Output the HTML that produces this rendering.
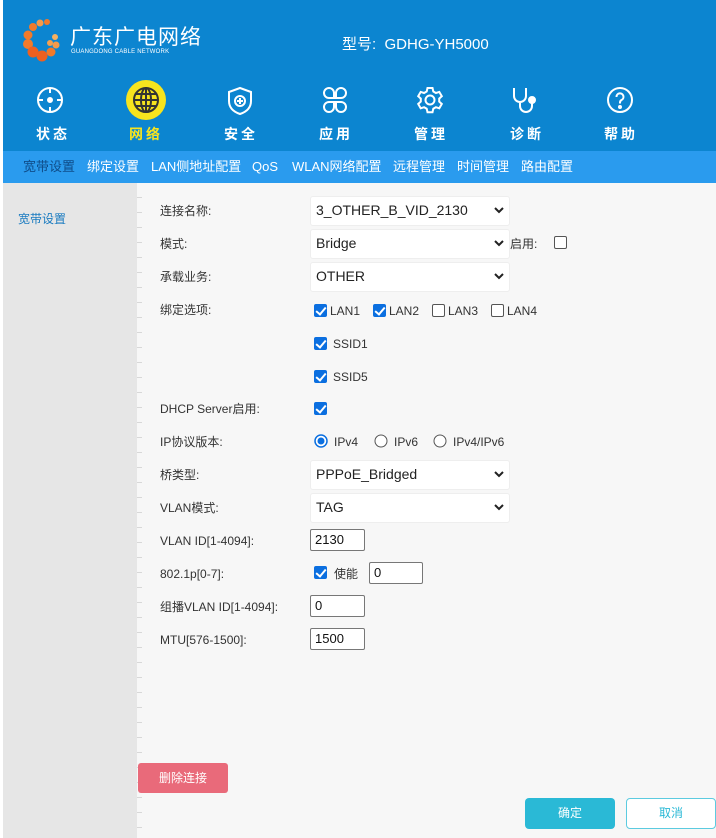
<!DOCTYPE html>
<html><head><meta charset="utf-8">
<style>
*{margin:0;padding:0;box-sizing:border-box}
body{width:716px;height:838px;background:#fff;font-family:"Liberation Sans","Noto Sans CJK SC",sans-serif;position:relative;overflow:hidden}
.hdr{position:absolute;left:3px;top:0;width:713px;height:151px;background:#0c85d0}
.sub{position:absolute;left:3px;top:151px;width:713px;height:32px;background:#2a9bee;font-size:13px;color:#fff}
.sub span{position:absolute;top:8px;white-space:nowrap;line-height:16px;height:16px}
.side{position:absolute;left:3px;top:183px;width:134px;height:655px;background:#e6e6e6}
.main{position:absolute;left:137px;top:183px;width:579px;height:655px;background:#f7f7f7;
 background-image:repeating-linear-gradient(to bottom,transparent 0,transparent 14px,#d8d8d8 14px,#d8d8d8 15px);background-size:5px 100%;background-repeat:no-repeat}
.abs{position:absolute;white-space:nowrap}
.lbl{position:absolute;left:160px;font-size:12px;color:#333;line-height:14px}
.sel{position:absolute;left:310px;width:200px;height:30px;background:#fff;border:1px solid #eee;border-radius:3px;font-size:14px;color:#222;padding:5px 0 0 5px}
.sel svg{position:absolute;right:5px;top:10px}
.inp{position:absolute;height:22px;background:#fff;border:1px solid #777;border-radius:2px;font-size:13px;color:#111;padding:2px 0 0 4px}
.cb{position:absolute;width:13px;height:13px;border-radius:2px}
.cb.on{background:#0b6fe0}
.cb.off{border:1px solid #555;background:#fff}
.cb.on::after{content:"";position:absolute;left:4px;top:1px;width:4px;height:8px;border:solid #fff;border-width:0 2px 2px 0;transform:rotate(40deg)}
.t{position:absolute;font-size:12px;color:#333;line-height:14px}
.nav{position:absolute;top:124px;font-size:14px;font-weight:bold;color:#fff;letter-spacing:3px}
</style></head><body>
<div class="hdr"></div>
<svg class="abs" style="left:20px;top:17px" width="50" height="46" viewBox="0 0 50 46">
<g fill="#f27a2a"><circle cx="20" cy="6" r="3.5" fill="#f59a4a"/><circle cx="27" cy="5" r="3"/><circle cx="13" cy="10" r="4"/><circle cx="8" cy="18" r="4.5"/><circle cx="8" cy="27" r="5"/><circle cx="13" cy="35" r="5.5" fill="#ee6020"/><circle cx="22" cy="39" r="5.5" fill="#ee6020"/><circle cx="31" cy="35" r="4.5"/><circle cx="36" cy="28" r="3.5" fill="#f59a4a"/><circle cx="30" cy="26" r="3" fill="#f5a050"/><circle cx="35" cy="20" r="3" fill="#f5b060"/></g></svg>
<div class="abs" style="left:70px;top:26px;font-size:21px;line-height:24px;color:#fff;letter-spacing:1px">广东广电网络</div>
<div class="abs" style="left:71px;top:49px;font-size:6px;line-height:7px;color:#fff;letter-spacing:.2px">GUANGDONG CABLE NETWORK</div>
<div class="abs" style="left:342px;top:33px;font-size:15px;color:#fff">型号:&nbsp; GDHG-YH5000</div>
<svg class="abs" style="left:36px;top:86px" width="28" height="28" viewBox="0 0 28 28" fill="none" stroke="#fff" stroke-width="2"><circle cx="14" cy="14" r="12"/><path d="M14 2v5M14 21v5M2 14h5M21 14h5"/><circle cx="14" cy="14" r="2" fill="#fff"/></svg>
<svg class="abs" style="left:125px;top:79px" width="42" height="42" viewBox="0 0 42 42"><circle cx="21" cy="21" r="20" fill="#f7e41e"/><g fill="none" stroke="#333" stroke-width="2"><circle cx="21" cy="21" r="12"/><ellipse cx="21" cy="21" rx="5" ry="12"/><path d="M9 21h24M11 15h20M11 27h20M21 9v24"/></g></svg>
<svg class="abs" style="left:227px;top:86px" width="26" height="30" viewBox="0 0 26 30" fill="none" stroke="#fff" stroke-width="2"><path d="M13 2L24 6v9c0 7-5 11-11 13C7 26 2 22 2 15V6z"/><circle cx="13" cy="15" r="5"/><path d="M13 12v6M10 15h6"/></svg>
<svg class="abs" style="left:321px;top:86px" width="28" height="28" viewBox="0 0 28 28" fill="none" stroke="#fff" stroke-width="2"><path d="M13 7a5 5 0 1 0-5 5h5zM15 7a5 5 0 1 1 5 5h-5zM13 21a5 5 0 1 1-5-5h5zM15 21a5 5 0 1 0 5-5h-5z"/></svg>
<svg class="abs" style="left:416px;top:86px" width="28" height="28" viewBox="0 0 28 28" fill="none" stroke="#fff" stroke-width="2"><path d="M11.5 2h5l.8 3.5 2.6 1.5 3.4-1.1 2.5 4.3-2.6 2.4v3l2.6 2.4-2.5 4.3-3.4-1.1-2.6 1.5-.8 3.5h-5l-.8-3.5-2.6-1.5-3.4 1.1-2.5-4.3 2.6-2.4v-3L2.2 10.2l2.5-4.3 3.4 1.1 2.6-1.5z"/><circle cx="14" cy="14" r="4.5"/></svg>
<svg class="abs" style="left:510px;top:86px" width="30" height="30" viewBox="0 0 30 30" fill="none" stroke="#fff" stroke-width="2"><path d="M4 2v8a6 6 0 0 0 12 0V2M10 16v4a6 6 0 0 0 12 0v-3"/><circle cx="22" cy="14" r="3" fill="#fff"/></svg>
<svg class="abs" style="left:606px;top:86px" width="28" height="28" viewBox="0 0 28 28" fill="none" stroke="#fff" stroke-width="2"><circle cx="14" cy="14" r="12"/><path d="M10.5 11a3.5 3.5 0 1 1 5 3c-1 .6-1.5 1.3-1.5 2.5v1"/><circle cx="14" cy="21" r="1" fill="#fff"/></svg>
<div class="nav" style="left:36px">状态</div>
<div class="nav" style="left:129px;color:#f7e41e">网络</div>
<div class="nav" style="left:224px">安全</div>
<div class="nav" style="left:319px">应用</div>
<div class="nav" style="left:414px">管理</div>
<div class="nav" style="left:510px">诊断</div>
<div class="nav" style="left:604px">帮助</div>
<div class="sub">
<span style="left:20px;color:#0f4d8a">宽带设置</span><span style="left:84px">绑定设置</span><span style="left:148px">LAN侧地址配置</span><span style="left:249px">QoS</span><span style="left:289px">WLAN网络配置</span><span style="left:390px">远程管理</span><span style="left:454px">时间管理</span><span style="left:518px">路由配置</span>
</div>
<div class="side"></div>
<div class="abs" style="left:18px;top:210px;font-size:12px;color:#1a7bc0">宽带设置</div>
<div class="main"></div>

<div class="lbl" style="top:204px">连接名称:</div>
<div class="sel" style="top:196px">3_OTHER_B_VID_2130<svg width="10" height="7" viewBox="0 0 10 7"><path d="M1 1l4 4 4-4" fill="none" stroke="#222" stroke-width="2"/></svg></div>
<div class="lbl" style="top:237px">模式:</div>
<div class="sel" style="top:229px">Bridge<svg width="10" height="7" viewBox="0 0 10 7"><path d="M1 1l4 4 4-4" fill="none" stroke="#222" stroke-width="2"/></svg></div>
<div class="t" style="left:510px;top:237px">启用:</div>
<div class="cb off" style="left:554px;top:236px"></div>
<div class="lbl" style="top:270px">承载业务:</div>
<div class="sel" style="top:262px">OTHER<svg width="10" height="7" viewBox="0 0 10 7"><path d="M1 1l4 4 4-4" fill="none" stroke="#222" stroke-width="2"/></svg></div>
<div class="lbl" style="top:303px">绑定选项:</div>
<div class="cb on" style="left:314px;top:304px"></div><div class="t" style="left:330px;top:304px">LAN1</div>
<div class="cb on" style="left:373px;top:304px"></div><div class="t" style="left:389px;top:304px">LAN2</div>
<div class="cb off" style="left:432px;top:304px"></div><div class="t" style="left:448px;top:304px">LAN3</div>
<div class="cb off" style="left:491px;top:304px"></div><div class="t" style="left:507px;top:304px">LAN4</div>
<div class="cb on" style="left:314px;top:337px"></div><div class="t" style="left:333px;top:337px">SSID1</div>
<div class="cb on" style="left:314px;top:370px"></div><div class="t" style="left:333px;top:370px">SSID5</div>
<div class="lbl" style="top:402px">DHCP Server启用:</div>
<div class="cb on" style="left:314px;top:402px"></div>
<div class="lbl" style="top:435px">IP协议版本:</div>
<svg class="abs" style="left:314px;top:434px" width="14" height="14"><circle cx="7" cy="7" r="6" fill="#fff" stroke="#0b6fe0" stroke-width="1.5"/><circle cx="7" cy="7" r="3.5" fill="#0b6fe0"/></svg><div class="t" style="left:334px;top:435px">IPv4</div>
<svg class="abs" style="left:374px;top:434px" width="14" height="14"><circle cx="7" cy="7" r="6" fill="#fff" stroke="#555" stroke-width="1"/></svg><div class="t" style="left:394px;top:435px">IPv6</div>
<svg class="abs" style="left:433px;top:434px" width="14" height="14"><circle cx="7" cy="7" r="6" fill="#fff" stroke="#555" stroke-width="1"/></svg><div class="t" style="left:453px;top:435px">IPv4/IPv6</div>
<div class="lbl" style="top:468px">桥类型:</div>
<div class="sel" style="top:460px">PPPoE_Bridged<svg width="10" height="7" viewBox="0 0 10 7"><path d="M1 1l4 4 4-4" fill="none" stroke="#222" stroke-width="2"/></svg></div>
<div class="lbl" style="top:501px">VLAN模式:</div>
<div class="sel" style="top:493px">TAG<svg width="10" height="7" viewBox="0 0 10 7"><path d="M1 1l4 4 4-4" fill="none" stroke="#222" stroke-width="2"/></svg></div>
<div class="lbl" style="top:534px">VLAN ID[1-4094]:</div>
<div class="inp" style="left:310px;top:529px;width:55px">2130</div>
<div class="lbl" style="top:567px">802.1p[0-7]:</div>
<div class="cb on" style="left:314px;top:566px"></div><div class="t" style="left:334px;top:567px">使能</div>
<div class="inp" style="left:369px;top:562px;width:54px">0</div>
<div class="lbl" style="top:600px">组播VLAN ID[1-4094]:</div>
<div class="inp" style="left:310px;top:595px;width:55px">0</div>
<div class="lbl" style="top:633px">MTU[576-1500]:</div>
<div class="inp" style="left:310px;top:628px;width:55px">1500</div>

<div class="abs" style="left:138px;top:763px;width:90px;height:30px;background:#e96a7a;border-radius:3px;color:#fff;font-size:12px;text-align:center;line-height:30px">删除连接</div>
<div class="abs" style="left:525px;top:798px;width:90px;height:31px;background:#2ab9d6;border-radius:4px;color:#fff;font-size:12px;text-align:center;line-height:31px">确定</div>
<div class="abs" style="left:626px;top:798px;width:90px;height:31px;background:#fff;border:1px solid #5ccbe0;border-radius:4px;color:#2ab9d6;font-size:12px;text-align:center;line-height:29px">取消</div>
</body></html>
